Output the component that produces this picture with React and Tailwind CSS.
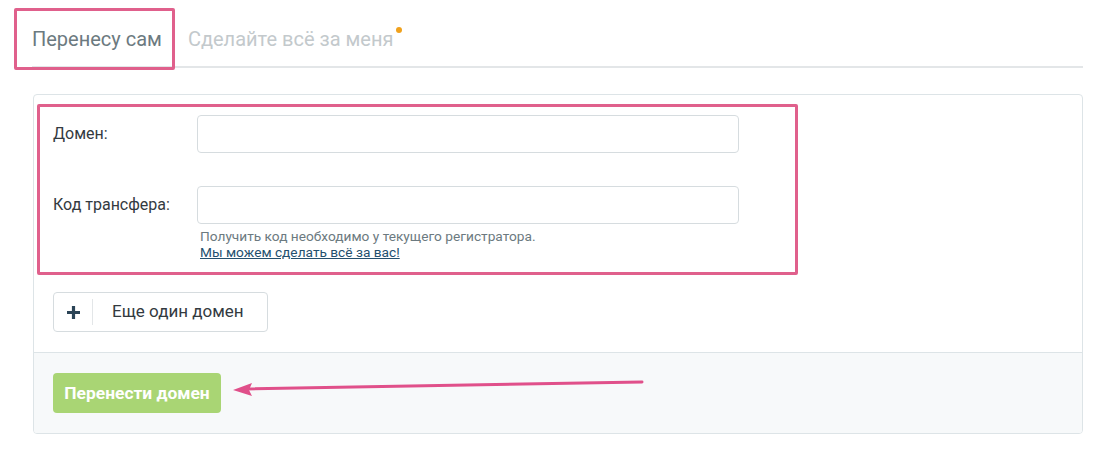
import React from "react";

export default function App() {
  return (
    <div className="relative w-[1106px] h-[450px] bg-white font-['Roboto',sans-serif] text-[#333a3f]">
      {/* Tabs */}
      <div className="ml-[32px] mr-[23px] h-[68px] pt-[12px] flex items-center gap-[26px] border-b-2 border-[#e3e6e8]">
        <div className="text-[20px] text-[#6c7a80] leading-none">Перенесу сам</div>
        <div className="relative text-[20px] text-[#c3c9cc] leading-none">
          Сделайте всё за меня
          <span className="absolute -right-[9px] -top-[2px] w-[6px] h-[6px] rounded-full bg-[#f0a11c]" />
        </div>
      </div>

      {/* Card */}
      <div className="ml-[33px] mt-[26px] w-[1050px] border border-[#dde4e7] rounded-[4px] overflow-hidden">
        <div className="pt-[20px] pb-[20px] px-[19px]">
          <div className="flex items-center">
            <div className="w-[144px] text-[16px]">Домен:</div>
            <input className="w-[542px] h-[38px] border border-[#d6dcdf] rounded-[4px] outline-none" />
          </div>
          <div className="flex mt-[33px]">
            <div className="w-[144px] h-[38px] flex items-center text-[16px]">Код трансфера:</div>
            <div>
              <input className="w-[542px] h-[38px] border border-[#d6dcdf] rounded-[4px] outline-none" />
              <div className="pl-[3px] pt-[4px] text-[13.7px] leading-[16px] text-[#6c7a80]">
                Получить код необходимо у текущего регистратора.
              </div>
              <a className="block pl-[3px] text-[13.7px] leading-[16px] text-[#24506e] underline">
                Мы можем сделать всё за вас!
              </a>
            </div>
          </div>
          <button className="mt-[32px] h-[40px] w-[215px] flex items-center border border-[#d6dcdf] rounded-[4px] bg-white">
            <span className="w-[38px] flex justify-center">
              <svg width="15" height="15" viewBox="0 0 15 15">
                <path d="M7.5 1v13M1 7.5h13" stroke="#2b4456" strokeWidth="3.2" />
              </svg>
            </span>
            <span className="h-[26px] border-l border-[#e3e6e8]" />
            <span className="pl-[19px] text-[17px] text-[#333a3f]">Еще один домен</span>
          </button>
        </div>
        <div className="bg-[#f7f9fa] border-t border-[#dde4e7] pt-[20px] pb-[20px] px-[19px]">
          <button className="h-[40px] w-[168px] rounded-[4px] bg-[#a9d574] text-white text-[17.4px] font-bold">
            Перенести домен
          </button>
        </div>
      </div>

      {/* Annotations */}
      <div className="absolute left-[14px] top-[8px] w-[161px] h-[62px] border-[3px] border-[#e0608c] rounded-[2px]" />
      <div className="absolute left-[37px] top-[104px] w-[761px] h-[171px] border-[3px] border-[#e0608c] rounded-[2px]" />
      <svg className="absolute left-0 top-0" width="1106" height="450">
        <line x1="642" y1="382" x2="246" y2="389" stroke="#e0508a" strokeWidth="3" strokeLinecap="round" />
        <path d="M233 390 L252 383 L249 390 L252 396 Z" fill="#e0508a" />
      </svg>
    </div>
  );
}
